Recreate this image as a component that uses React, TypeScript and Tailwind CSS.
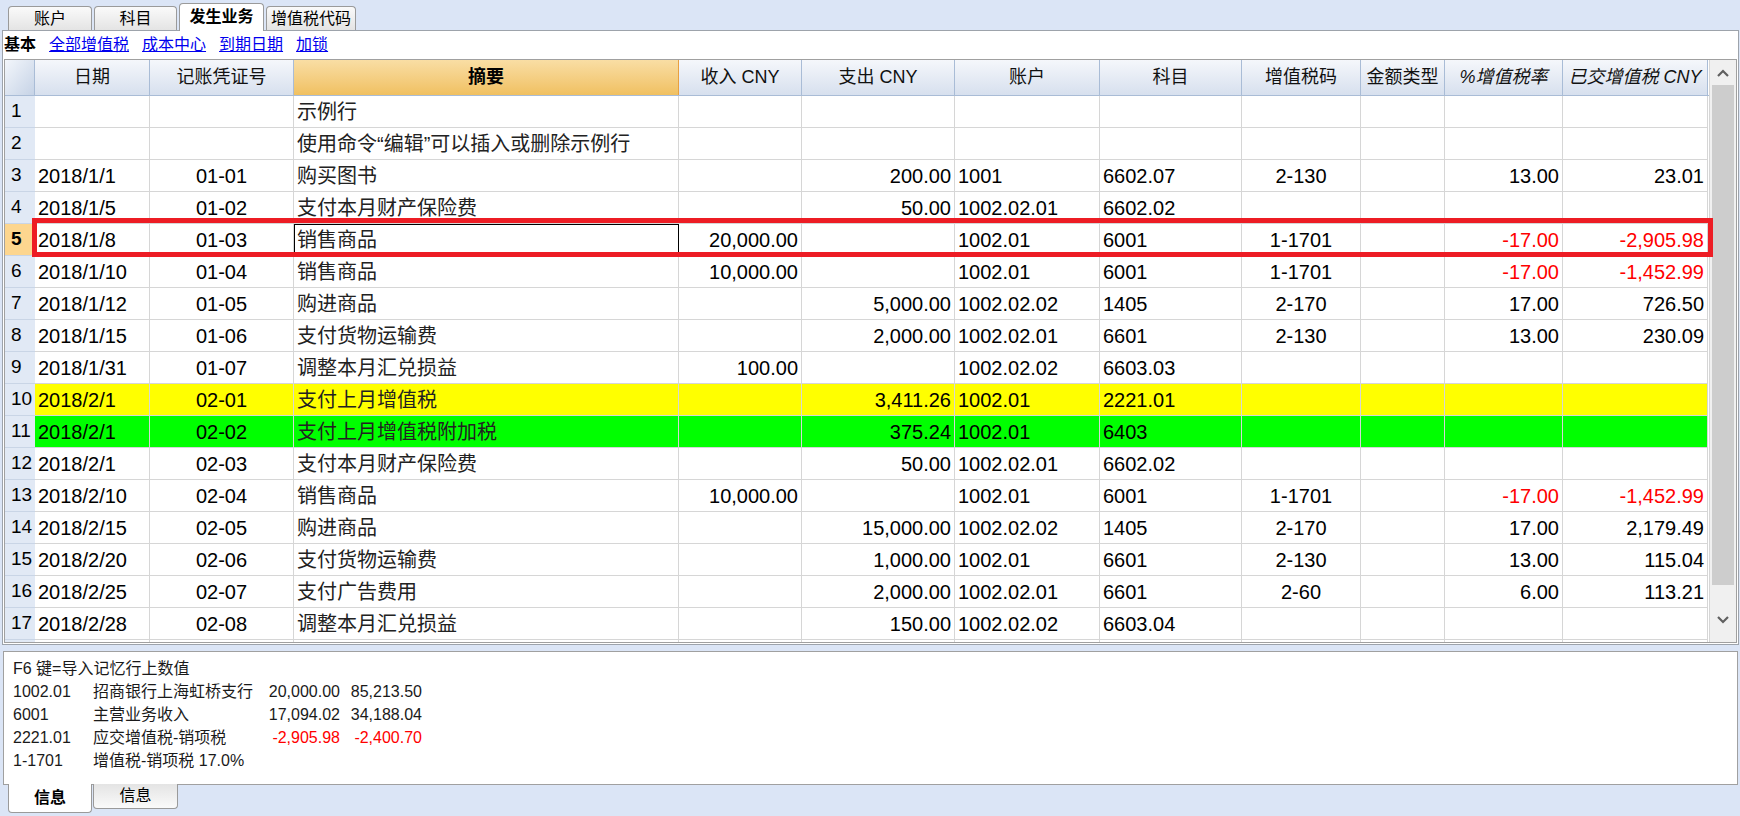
import React from "react";

const W = [30, 115, 144, 385, 123, 153, 145, 142, 119, 84, 118, 145];
const ALIGN = ["left", "left", "center", "left", "right", "right", "left", "left", "center", "center", "right", "right"];

type Row = { n: string; c: string[]; bg?: string; red?: boolean };

const rows: Row[] = [
  { n: "1", c: ["", "", "示例行", "", "", "", "", "", "", "", ""] },
  { n: "2", c: ["", "", "使用命令“编辑”可以插入或删除示例行", "", "", "", "", "", "", "", ""] },
  { n: "3", c: ["2018/1/1", "01-01", "购买图书", "", "200.00", "1001", "6602.07", "2-130", "", "13.00", "23.01"] },
  { n: "4", c: ["2018/1/5", "01-02", "支付本月财产保险费", "", "50.00", "1002.02.01", "6602.02", "", "", "", ""] },
  { n: "5", c: ["2018/1/8", "01-03", "销售商品", "20,000.00", "", "1002.01", "6001", "1-1701", "", "-17.00", "-2,905.98"], red: true },
  { n: "6", c: ["2018/1/10", "01-04", "销售商品", "10,000.00", "", "1002.01", "6001", "1-1701", "", "-17.00", "-1,452.99"], red: true },
  { n: "7", c: ["2018/1/12", "01-05", "购进商品", "", "5,000.00", "1002.02.02", "1405", "2-170", "", "17.00", "726.50"] },
  { n: "8", c: ["2018/1/15", "01-06", "支付货物运输费", "", "2,000.00", "1002.02.01", "6601", "2-130", "", "13.00", "230.09"] },
  { n: "9", c: ["2018/1/31", "01-07", "调整本月汇兑损益", "100.00", "", "1002.02.02", "6603.03", "", "", "", ""] },
  { n: "10", c: ["2018/2/1", "02-01", "支付上月增值税", "", "3,411.26", "1002.01", "2221.01", "", "", "", ""], bg: "y" },
  { n: "11", c: ["2018/2/1", "02-02", "支付上月增值税附加税", "", "375.24", "1002.01", "6403", "", "", "", ""], bg: "g" },
  { n: "12", c: ["2018/2/1", "02-03", "支付本月财产保险费", "", "50.00", "1002.02.01", "6602.02", "", "", "", ""] },
  { n: "13", c: ["2018/2/10", "02-04", "销售商品", "10,000.00", "", "1002.01", "6001", "1-1701", "", "-17.00", "-1,452.99"], red: true },
  { n: "14", c: ["2018/2/15", "02-05", "购进商品", "", "15,000.00", "1002.02.02", "1405", "2-170", "", "17.00", "2,179.49"] },
  { n: "15", c: ["2018/2/20", "02-06", "支付货物运输费", "", "1,000.00", "1002.01", "6601", "2-130", "", "13.00", "115.04"] },
  { n: "16", c: ["2018/2/25", "02-07", "支付广告费用", "", "2,000.00", "1002.02.01", "6601", "2-60", "", "6.00", "113.21"] },
  { n: "17", c: ["2018/2/28", "02-08", "调整本月汇兑损益", "", "150.00", "1002.02.02", "6603.04", "", "", "", ""] },
  { n: "", c: ["", "", "", "", "", "", "", "", "", "", ""] },
];

const headers = ["日期", "记账凭证号", "摘要", "收入 CNY", "支出 CNY", "账户", "科目", "增值税码", "金额类型", "%增值税率", "已交增值税 CNY"];

function alignCls(a: string) {
  if (a === "right") return "justify-end pr-[3px]";
  if (a === "center") return "justify-center";
  return "justify-start pl-[3px]";
}

function Chevron({ up }: { up?: boolean }) {
  return (
    <svg width="14" height="10" viewBox="0 0 14 10">
      <polyline
        points={up ? "2,8 7,3 12,8" : "2,2 7,7 12,2"}
        fill="none"
        stroke="#606060"
        strokeWidth="2.2"
      />
    </svg>
  );
}

export default function App() {
  const font = { fontFamily: '"Liberation Sans", "Noto Sans CJK SC", sans-serif' };
  return (
    <div
      className="w-[1740px] h-[816px] bg-[#dbe5f6] relative overflow-hidden text-black"
      style={font}
    >
      {/* top tabs */}
      <div className="flex items-end h-[30px] pl-[8px] gap-[2px] relative z-10">
        <div className="w-[84px] h-[24px] border border-b-0 border-[#9a9a9a] rounded-t-[4px] bg-gradient-to-b from-[#fafafa] to-[#e4e4e4] flex items-center justify-center text-[16px]">账户</div>
        <div className="w-[83px] h-[24px] border border-b-0 border-[#9a9a9a] rounded-t-[4px] bg-gradient-to-b from-[#fafafa] to-[#e4e4e4] flex items-center justify-center text-[16px]">科目</div>
        <div className="w-[85px] h-[28px] mb-[-1px] border border-b-0 border-[#9a9a9a] rounded-t-[4px] bg-white flex items-center justify-center text-[16px] font-bold pb-[2px]">发生业务</div>
        <div className="w-[90px] h-[24px] border border-b-0 border-[#9a9a9a] rounded-t-[4px] bg-gradient-to-b from-[#fafafa] to-[#e4e4e4] flex items-center justify-center text-[16px]">增值税代码</div>
      </div>

      {/* main panel */}
      <div className="ml-[2px] w-[1737px] h-[615px] border border-[#9da3ab] bg-white flex flex-col">
        <div className="h-[28px] flex items-center pl-[1px] gap-[13px] text-[16px]">
          <span className="font-bold">基本</span>
          <span className="text-[#0000ee] underline">全部增值税</span>
          <span className="text-[#0000ee] underline">成本中心</span>
          <span className="text-[#0000ee] underline">到期日期</span>
          <span className="text-[#0000ee] underline">加锁</span>
        </div>
        {/* grid */}
        <div className="ml-[1px] w-[1733px] h-[584px] border border-[#a0a0a0] flex overflow-hidden">
          <div className="flex flex-col w-[1704px] overflow-hidden">
            {/* header */}
            <div className="flex h-[36px] shrink-0 border-b border-[#a9bcd6]">
              <div className="w-[30px] shrink-0 h-full bg-gradient-to-br from-[#f3f6fb] to-[#c6d3e6] border-r border-[#a9bcd6]" />
              {headers.map((h, i) => {
                const active = i === 2;
                const italic = i >= 9;
                return (
                  <div
                    key={i}
                    style={{ width: W[i + 1] }}
                    className={
                      "shrink-0 h-full flex items-center justify-center text-[18px] border-r " +
                      (active
                        ? "bg-gradient-to-b from-[#f9dea4] to-[#f0c060] border-[#e8a040] font-bold "
                        : "bg-gradient-to-b from-[#f5f7fb] to-[#d7e0ee] border-[#a9bcd6] text-[#111] ") +
                      (italic ? "italic" : "")
                    }
                  >
                    {h}
                  </div>
                );
              })}
            </div>
            {/* body rows */}
            {rows.map((r, ri) => {
              const rowBg = r.bg === "y" ? "bg-[#ffff00]" : r.bg === "g" ? "bg-[#00ff00]" : "bg-white";
              const sel = r.n === "5";
              return (
                <div key={ri} className="flex h-[32px] shrink-0">
                  <div
                    className={
                      "w-[30px] shrink-0 h-full flex items-center pl-[6px] text-[19px] border-b border-[#c9d5e6] " +
                      (sel ? "bg-[#fdd68f] font-bold" : "bg-[#e1e9f5]")
                    }
                  >
                    {r.n}
                  </div>
                  {r.c.map((v, ci) => {
                    const redCell = r.red && (ci === 9 || ci === 10);
                    const isSel = sel && ci === 2;
                    return (
                      <div
                        key={ci}
                        style={{ width: W[ci + 1] }}
                        className={
                          "shrink-0 h-full flex items-center whitespace-nowrap overflow-hidden text-[20px] border-r border-b border-[#d6d6d6] " +
                          rowBg +
                          " " +
                          alignCls(ALIGN[ci + 1]) +
                          (redCell ? " text-[#ff0000]" : ci === 2 ? " text-[#222]" : "") +
                          (isSel ? " outline outline-1 outline-black -outline-offset-1" : "")
                        }
                      >
                        {v}
                      </div>
                    );
                  })}
                </div>
              );
            })}
          </div>
          {/* scrollbar */}
          <div className="w-[27px] shrink-0 bg-[#f0f0f0] border-l border-[#d6d6d6] flex flex-col items-center">
            <div className="h-[25px] w-full flex items-center justify-center">
              <Chevron up />
            </div>
            <div className="w-[22px] h-[500px] bg-[#cdcdcd]" />
            <div className="flex-1" />
            <div className="h-[24px] w-full flex items-center justify-center mb-[10px]">
              <Chevron />
            </div>
          </div>
        </div>
      </div>

      {/* info panel */}
      <div className="mt-[6px] ml-[3px] w-[1735px] h-[134px] border border-[#a0a0a0] bg-white pt-[5px] pl-[9px] text-[16px] leading-[23px] text-[#1a1a1a]">
        <div>F6 键=导入记忆行上数值</div>
        <div className="grid grid-cols-[80px_160px_87px_82px]">
          <div>1002.01</div>
          <div>招商银行上海虹桥支行</div>
          <div className="text-right">20,000.00</div>
          <div className="text-right">85,213.50</div>
          <div>6001</div>
          <div>主营业务收入</div>
          <div className="text-right">17,094.02</div>
          <div className="text-right">34,188.04</div>
          <div>2221.01</div>
          <div>应交增值税-销项税</div>
          <div className="text-right text-[#ff0000]">-2,905.98</div>
          <div className="text-right text-[#ff0000]">-2,400.70</div>
          <div>1-1701</div>
          <div className="col-span-3">增值税-销项税 17.0%</div>
        </div>
      </div>

      {/* bottom tabs */}
      <div className="flex items-start pl-[8px] gap-[1px] mt-[-1px]">
        <div className="w-[84px] h-[29px] border border-t-0 border-[#9a9a9a] rounded-b-[4px] bg-white flex items-center justify-center text-[16px] font-bold">信息</div>
        <div className="w-[85px] h-[25px] border border-t-0 border-[#9a9a9a] rounded-b-[4px] bg-gradient-to-b from-[#e4e4e4] to-[#fafafa] flex items-center justify-center text-[16px]">信息</div>
      </div>

      {/* red highlight */}
      <div className="absolute left-[32px] top-[218px] w-[1681px] h-[39px] border-[5px] border-[#ed1c24] pointer-events-none" />
    </div>
  );
}
